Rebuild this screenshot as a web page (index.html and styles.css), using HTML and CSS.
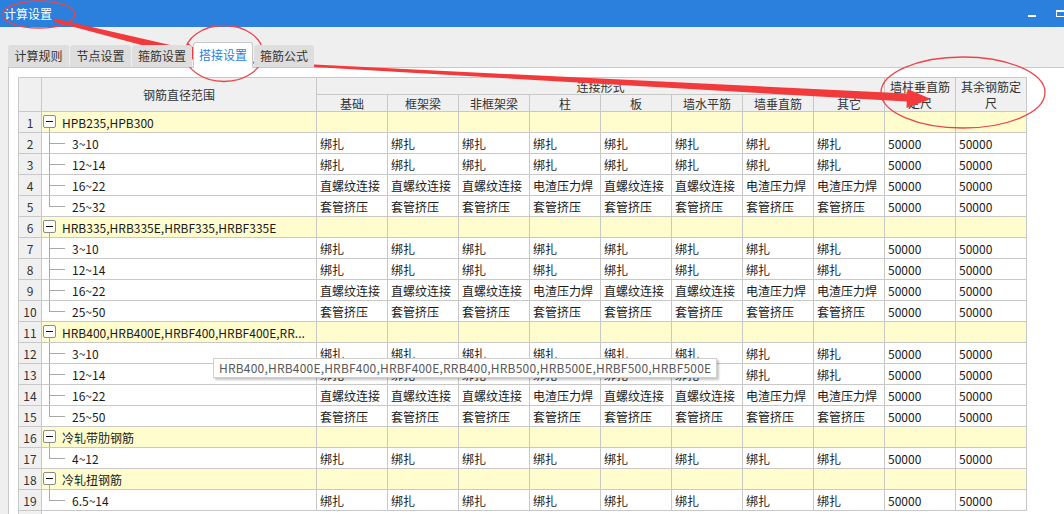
FILE: index.html
```html
<!DOCTYPE html>
<html lang="zh">
<head>
<meta charset="utf-8">
<title>计算设置</title>
<link rel="stylesheet" href="styles.css">
</head>
<body>
<div class="titlebar">
  <span class="title">计算设置</span>
  <div class="winbtns"><span class="btn-min"></span><span class="btn-max"></span></div>
</div>
<div class="tabs">
  <div class="tab">计算规则</div>
  <div class="tab">节点设置</div>
  <div class="tab w60">箍筋设置</div>
  <div class="tab w60 active">搭接设置</div>
  <div class="tab w60">箍筋公式</div>
</div>
<div class="panel">
  <div class="grid">
    <div class="h hn"></div>
    <div class="h hname">钢筋直径范围</div>
    <div class="h hgroup">连接形式</div>
    <div class="h hwrap hc11">墙柱垂直筋定尺</div>
    <div class="h hwrap hc12">其余钢筋定尺</div>
    <div class="h">基础</div><div class="h">框架梁</div><div class="h">非框架梁</div><div class="h">柱</div><div class="h">板</div><div class="h">墙水平筋</div><div class="h">墙垂直筋</div><div class="h">其它</div>

    <div class="n">1</div><div class="g y"><span class="box"></span>HPB235,HPB300</div><div class="y"></div><div class="y"></div><div class="y"></div><div class="y"></div><div class="y"></div><div class="y"></div><div class="y"></div><div class="y"></div><div class="y"></div><div class="y"></div>
    <div class="n">2</div><div class="c">3~10</div><div>绑扎</div><div>绑扎</div><div>绑扎</div><div>绑扎</div><div>绑扎</div><div>绑扎</div><div>绑扎</div><div>绑扎</div><div>50000</div><div>50000</div>
    <div class="n">3</div><div class="c">12~14</div><div>绑扎</div><div>绑扎</div><div>绑扎</div><div>绑扎</div><div>绑扎</div><div>绑扎</div><div>绑扎</div><div>绑扎</div><div>50000</div><div>50000</div>
    <div class="n">4</div><div class="c">16~22</div><div>直螺纹连接</div><div>直螺纹连接</div><div>直螺纹连接</div><div>电渣压力焊</div><div>直螺纹连接</div><div>直螺纹连接</div><div>电渣压力焊</div><div>电渣压力焊</div><div>50000</div><div>50000</div>
    <div class="n">5</div><div class="c last">25~32</div><div>套管挤压</div><div>套管挤压</div><div>套管挤压</div><div>套管挤压</div><div>套管挤压</div><div>套管挤压</div><div>套管挤压</div><div>套管挤压</div><div>50000</div><div>50000</div>

    <div class="n">6</div><div class="g y"><span class="box"></span>HRB335,HRB335E,HRBF335,HRBF335E</div><div class="y"></div><div class="y"></div><div class="y"></div><div class="y"></div><div class="y"></div><div class="y"></div><div class="y"></div><div class="y"></div><div class="y"></div><div class="y"></div>
    <div class="n">7</div><div class="c">3~10</div><div>绑扎</div><div>绑扎</div><div>绑扎</div><div>绑扎</div><div>绑扎</div><div>绑扎</div><div>绑扎</div><div>绑扎</div><div>50000</div><div>50000</div>
    <div class="n">8</div><div class="c">12~14</div><div>绑扎</div><div>绑扎</div><div>绑扎</div><div>绑扎</div><div>绑扎</div><div>绑扎</div><div>绑扎</div><div>绑扎</div><div>50000</div><div>50000</div>
    <div class="n">9</div><div class="c">16~22</div><div>直螺纹连接</div><div>直螺纹连接</div><div>直螺纹连接</div><div>电渣压力焊</div><div>直螺纹连接</div><div>直螺纹连接</div><div>电渣压力焊</div><div>电渣压力焊</div><div>50000</div><div>50000</div>
    <div class="n">10</div><div class="c last">25~50</div><div>套管挤压</div><div>套管挤压</div><div>套管挤压</div><div>套管挤压</div><div>套管挤压</div><div>套管挤压</div><div>套管挤压</div><div>套管挤压</div><div>50000</div><div>50000</div>

    <div class="n">11</div><div class="g y"><span class="box"></span>HRB400,HRB400E,HRBF400,HRBF400E,RR...</div><div class="y"></div><div class="y"></div><div class="y"></div><div class="y"></div><div class="y"></div><div class="y"></div><div class="y"></div><div class="y"></div><div class="y"></div><div class="y"></div>
    <div class="n">12</div><div class="c">3~10</div><div>绑扎</div><div>绑扎</div><div>绑扎</div><div>绑扎</div><div>绑扎</div><div>绑扎</div><div>绑扎</div><div>绑扎</div><div>50000</div><div>50000</div>
    <div class="n">13</div><div class="c">12~14</div><div>绑扎</div><div>绑扎</div><div>绑扎</div><div>绑扎</div><div>绑扎</div><div>绑扎</div><div>绑扎</div><div>绑扎</div><div>50000</div><div>50000</div>
    <div class="n">14</div><div class="c">16~22</div><div>直螺纹连接</div><div>直螺纹连接</div><div>直螺纹连接</div><div>电渣压力焊</div><div>直螺纹连接</div><div>直螺纹连接</div><div>电渣压力焊</div><div>电渣压力焊</div><div>50000</div><div>50000</div>
    <div class="n">15</div><div class="c last">25~50</div><div>套管挤压</div><div>套管挤压</div><div>套管挤压</div><div>套管挤压</div><div>套管挤压</div><div>套管挤压</div><div>套管挤压</div><div>套管挤压</div><div>50000</div><div>50000</div>

    <div class="n">16</div><div class="g y"><span class="box"></span>冷轧带肋钢筋</div><div class="y"></div><div class="y"></div><div class="y"></div><div class="y"></div><div class="y"></div><div class="y"></div><div class="y"></div><div class="y"></div><div class="y"></div><div class="y"></div>
    <div class="n">17</div><div class="c last">4~12</div><div>绑扎</div><div>绑扎</div><div>绑扎</div><div>绑扎</div><div>绑扎</div><div>绑扎</div><div>绑扎</div><div>绑扎</div><div>50000</div><div>50000</div>

    <div class="n">18</div><div class="g y"><span class="box"></span>冷轧扭钢筋</div><div class="y"></div><div class="y"></div><div class="y"></div><div class="y"></div><div class="y"></div><div class="y"></div><div class="y"></div><div class="y"></div><div class="y"></div><div class="y"></div>
    <div class="n">19</div><div class="c last">6.5~14</div><div>绑扎</div><div>绑扎</div><div>绑扎</div><div>绑扎</div><div>绑扎</div><div>绑扎</div><div>绑扎</div><div>绑扎</div><div>50000</div><div>50000</div>
    <div class="n tail"></div>
  </div>
</div>

<div class="tip">HRB400,HRB400E,HRBF400,HRBF400E,RRB400,HRB500,HRB500E,HRBF500,HRBF500E</div>

<svg class="marks" width="1064" height="514" viewBox="0 0 1064 514" aria-hidden="true">
  <ellipse cx="39" cy="14.5" rx="36" ry="13.5" fill="none" stroke="#e9464b" stroke-width="1.3"/>
  <ellipse cx="224" cy="53.5" rx="39" ry="28" fill="none" stroke="#e9464b" stroke-width="1.3"/>
  <ellipse cx="963" cy="92.5" rx="82" ry="35.5" fill="none" stroke="#e9464b" stroke-width="1.3"/>
  <polygon fill="#f23a3c" points="54.5,18.5 185.6,48.6 187.8,42.8 204,57 182.4,61.4 184.4,56.4 53.5,21.5"/>
  <polygon fill="#f23a3c" points="252.1,61.5 907.2,93.6 907.5,89 931,99 906.5,108 906.8,101.6 251.9,63.5"/>
</svg>
</body>
</html>
```

FILE: styles.css
```css
* { box-sizing: border-box; }
html, body { margin: 0; padding: 0; }
body {
  width: 1064px;
  height: 514px;
  overflow: hidden;
  position: relative;
  background: #efefef;
  font-family: "Noto Sans CJK SC", "Microsoft YaHei", sans-serif;
  font-size: 12px;
  color: #1a1a1a;
}

.titlebar {
  height: 27px;
  background: #2b7fdd;
  color: #fff;
  display: flex;
  align-items: center;
  justify-content: space-between;
  padding-left: 4px;
}
.title { line-height: 27px; font-size: 12px; }
.winbtns {
  display: flex;
  align-items: center;
  gap: 20px;
  margin-right: -4px;
  height: 27px;
}
.btn-min { width: 8px; height: 2px; background: #fff; margin-top: 5px; }
.btn-max { width: 12px; height: 7px; border: 1px solid #fff; border-top-width: 2px; margin-top: -1px; }

.tabs {
  height: 40px;
  display: flex;
  align-items: flex-end;
  gap: 1px;
  padding-left: 8px;
  position: relative;
  z-index: 2;
}
.tab {
  width: 61px;
  height: 22px;
  line-height: 22px;
  text-align: center;
  background: #dedede;
  border-radius: 3px 3px 0 0;
  color: #333;
}
.tab.w60 { width: 60px; }
.tab.active {
  height: 26px;
  line-height: 24px;
  margin-bottom: -1px;
  background: #fff;
  border: 1px solid #c9c9c9;
  border-bottom: none;
  color: #2b7fdd;
}

.panel {
  margin-left: 8px;
  height: 447px;
  background: #fff;
  border-top: 1px solid #c9c9c9;
  border-left: 1px solid #c9c9c9;
  padding: 9px 0 0 9px;
}

.grid {
  width: 1009px;
  display: grid;
  grid-template-columns: 23px 275px repeat(10, 71px);
  grid-template-rows: 17px 17px;
  grid-auto-rows: 21px;
  border-top: 1px solid #c8c8c8;
  border-left: 1px solid #c8c8c8;
}
.grid > div {
  border-right: 1px solid #c8c8c8;
  border-bottom: 1px solid #c8c8c8;
  display: flex;
  align-items: center;
  padding-left: 3px;
  white-space: nowrap;
  overflow: hidden;
  position: relative;
}
.grid > .h {
  background: #f0f0f0;
  color: #333;
  justify-content: center;
  padding: 0;
}
.grid > .hn, .grid > .hname { grid-row: 1 / span 2; }
.grid > .hgroup { grid-column: 3 / span 8; }
.grid > .hwrap {
  grid-row: 1 / span 2;
  white-space: normal;
  text-align: center;
  line-height: 16px;
  padding: 0 1px;
}
.grid > .hc11 { grid-column: 11; }
.grid > .hc12 { grid-column: 12; }

.grid > .n {
  background: #f0f0f0;
  color: #333;
  justify-content: center;
  padding: 0;
}
.grid > .tail { border-bottom: none; }
.grid > .y { background: #fffdcd; }

.grid > .g { padding-left: 20px; }
.box {
  position: absolute;
  left: 1px;
  top: 3px;
  width: 13px;
  height: 13px;
  border: 1px solid #8c8c8c;
  border-radius: 2px;
  background: #fff;
}
.box::before {
  content: "";
  position: absolute;
  left: 2px;
  top: 5px;
  width: 7px;
  height: 1px;
  background: #111;
}
.grid > .g::after {
  content: "";
  position: absolute;
  left: 7px;
  top: 16px;
  bottom: 0;
  border-left: 1px solid #a8a8a8;
}

.grid > .c { padding-left: 30px; }
.grid > .c::before {
  content: "";
  position: absolute;
  left: 7px;
  top: 0;
  bottom: 0;
  border-left: 1px solid #a8a8a8;
}
.grid > .c.last::before { bottom: auto; height: 11px; }
.grid > .c::after {
  content: "";
  position: absolute;
  left: 7px;
  top: 10px;
  width: 16px;
  border-top: 1px solid #a8a8a8;
}

.tip {
  position: absolute;
  left: 213px;
  top: 358px;
  height: 20px;
  padding: 0 5px;
  background: #fff;
  border: 1px solid #d0d0d0;
  box-shadow: 2px 2px 2px rgba(0, 0, 0, 0.22);
  color: #585858;
  line-height: 18px;
  letter-spacing: 0.2px;
  white-space: nowrap;
}

.marks {
  position: absolute;
  left: 0;
  top: 0;
  pointer-events: none;
}
```
